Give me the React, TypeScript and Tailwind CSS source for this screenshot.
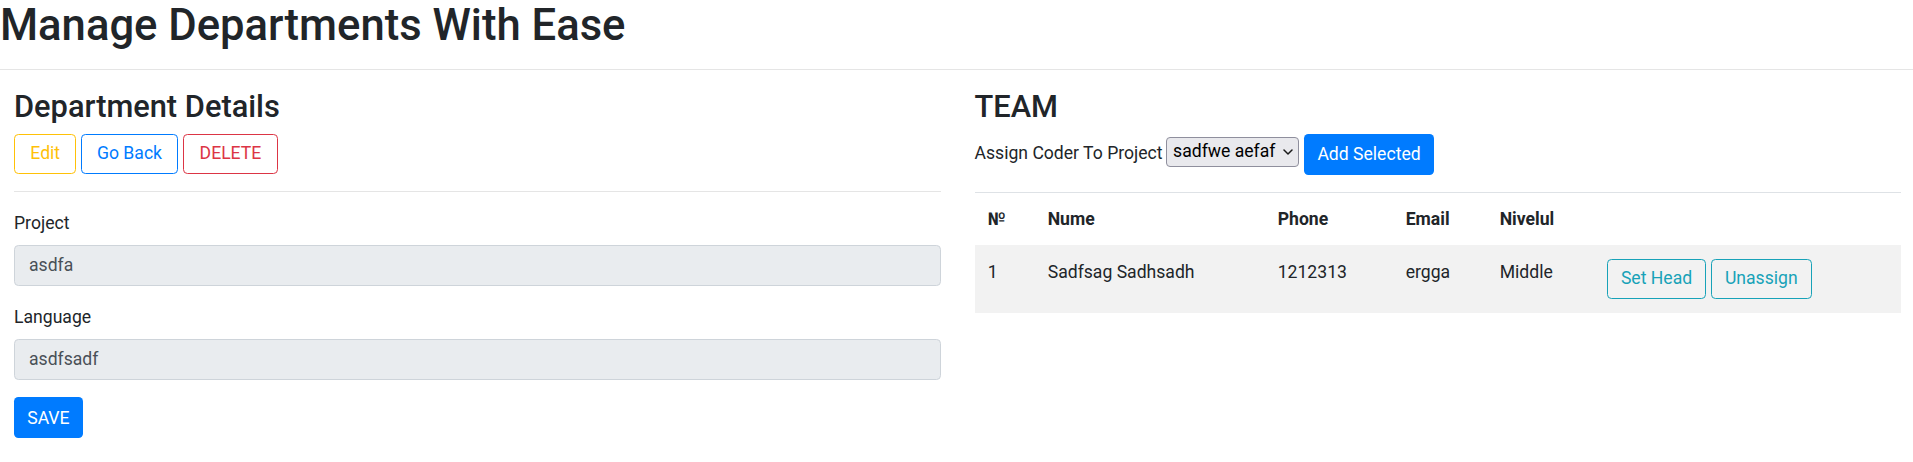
const coders = [
  { no: 1, name: "Sadfsag Sadhsadh", phone: "1212313", email: "ergga", level: "Middle" },
];

function ChevronDown() {
  return (
    <svg width="10" height="6" viewBox="0 0 10 6" fill="none">
      <path d="M1 1l4 4 4-4" stroke="#1a1a1a" strokeWidth="1.5" strokeLinecap="round" strokeLinejoin="round" />
    </svg>
  );
}

export default function App() {
  return (
    <div className="min-h-screen bg-white font-['Roboto',sans-serif] text-[17.6px] leading-[26.4px] text-[#212529]">
      <h1 className="m-0 text-[43.6px] leading-[52.8px] font-medium">Manage Departments With Ease</h1>
      <hr className="mt-[16px] border-0 border-t border-[#e5e5e5]" />

      <div className="grid grid-cols-2 gap-[34px] pl-[14px] pr-[12px]">
        {/* Department details */}
        <div>
          <h3 className="mt-[18px] mb-[8.8px] text-[30.8px] leading-[37px] font-medium">Department Details</h3>
          <div className="flex gap-[4.4px]">
            <button className="h-[40px] px-[15.3px] rounded-[4.4px] border border-[#ffc107] text-[#ffc107]">Edit</button>
            <button className="h-[40px] px-[15.2px] rounded-[4.4px] border border-[#007bff] text-[#007bff]">Go Back</button>
            <button className="h-[40px] px-[16px] rounded-[4.4px] border border-[#dc3545] text-[#dc3545]">DELETE</button>
          </div>
          <hr className="my-[17.6px] border-0 border-t border-[#e5e5e5]" />

          <div className="mb-[17.6px]">
            <label className="block mb-[8.8px]">Project</label>
            <div className="h-[41px] flex items-center px-[14px] rounded-[4.4px] border border-[#ced4da] bg-[#e9ecef] text-[#495057]">
              asdfa
            </div>
          </div>
          <div className="mb-[17.6px]">
            <label className="block mb-[8.8px]">Language</label>
            <div className="h-[41px] flex items-center px-[14px] rounded-[4.4px] border border-[#ced4da] bg-[#e9ecef] text-[#495057]">
              asdfsadf
            </div>
          </div>
          <button className="h-[41px] px-[13.2px] rounded-[4.4px] bg-[#007bff] text-white">SAVE</button>
        </div>

        {/* Team */}
        <div>
          <h3 className="mt-[18px] mb-[8.8px] text-[30.8px] leading-[37px] font-medium">TEAM</h3>
          <div className="flex h-[41px]">
            <span className="mt-[6px] mr-[3.5px]">Assign Coder To Project</span>
            <div className="mt-[3px] mr-[4.4px] h-[30px] flex items-center gap-[8px] pl-[6px] pr-[5px] rounded-[4px] border border-[#8f8f9d] bg-[#e9e9ed] text-black">
              <span>sadfwe aefaf</span>
              <ChevronDown />
            </div>
            <button className="h-[41px] px-[13.6px] rounded-[4.4px] bg-[#007bff] text-white">Add Selected</button>
          </div>

          <table className="mt-[17px] w-full table-fixed border-collapse text-left">
            <thead>
              <tr>
                <th className="w-[60px] p-[13.2px] border-t border-[#dee2e6] font-bold">№</th>
                <th className="w-[230px] p-[13.2px] border-t border-[#dee2e6] font-bold">Nume</th>
                <th className="w-[128px] p-[13.2px] border-t border-[#dee2e6] font-bold">Phone</th>
                <th className="w-[94px] p-[13.2px] border-t border-[#dee2e6] font-bold">Email</th>
                <th className="w-[107px] p-[13.2px] border-t border-[#dee2e6] font-bold">Nivelul</th>
                <th className="p-[13.2px] border-t border-[#dee2e6]"></th>
              </tr>
            </thead>
            <tbody>
              {coders.map((c) => (
                <tr key={c.no} className="bg-[#f2f2f2]">
                  <td className="align-top px-[13.2px] pt-[13.2px] pb-[14.5px]">{c.no}</td>
                  <td className="align-top px-[13.2px] pt-[13.2px] pb-[14.5px]">{c.name}</td>
                  <td className="align-top px-[13.2px] pt-[13.2px] pb-[14.5px]">{c.phone}</td>
                  <td className="align-top px-[13.2px] pt-[13.2px] pb-[14.5px]">{c.email}</td>
                  <td className="align-top px-[13.2px] pt-[13.2px] pb-[14.5px]">{c.level}</td>
                  <td className="align-top px-[13.2px] pt-[13.2px] pb-[14.5px]">
                    <div className="flex gap-[4.4px]">
                      <button className="h-[40px] px-[13.2px] rounded-[4.4px] border border-[#17a2b8] text-[#17a2b8]">Set Head</button>
                      <button className="h-[40px] px-[13.2px] rounded-[4.4px] border border-[#17a2b8] text-[#17a2b8]">Unassign</button>
                    </div>
                  </td>
                </tr>
              ))}
            </tbody>
          </table>
        </div>
      </div>
    </div>
  );
}
